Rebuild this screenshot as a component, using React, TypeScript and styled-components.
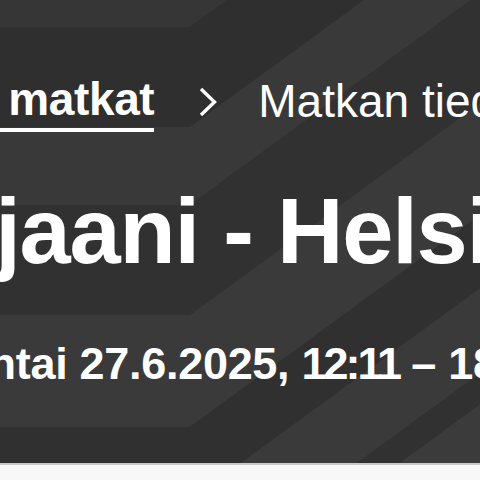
import React from "react"
import styled, { createGlobalStyle } from "styled-components"

const GlobalStyle = createGlobalStyle`
  html, body {
    margin: 0;
    padding: 0;
    background: #f7f7f7;
    overflow: hidden;
  }
  * {
    box-sizing: border-box;
  }
`

const Page = styled.div`
  width: 480px;
  height: 480px;
  display: flex;
  flex-direction: column;
  overflow: hidden;
  font-family: "Liberation Sans", Arial, sans-serif;
`

const Hero = styled.header`
  position: relative;
  height: 463px;
  flex: none;
  background: #303030;
  overflow: hidden;
`

const Backdrop = styled.svg`
  position: absolute;
  inset: 0;
  z-index: 0;
`

const Content = styled.div`
  position: relative;
  z-index: 1;
  display: flex;
  flex-direction: column;
  padding-top: 73px;
  margin-left: -120px;
  color: #ffffff;
  white-space: nowrap;
`

const Breadcrumbs = styled.nav`
  display: flex;
  align-items: center;
  gap: 45px;
  height: 56px;
  font-size: 46px;
  line-height: 56px;
`

const CrumbLink = styled.a`
  color: #ffffff;
  font-weight: 700;
  letter-spacing: -0.4px;
  text-decoration: none;
  padding-bottom: 1px;
  border-bottom: 4px solid #ffffff;
`

const Crumb = styled.span`
  font-weight: 400;
  margin-left: -4px;
`

const Chevron = styled.svg`
  width: 18px;
  height: 30px;
  flex: none;
  margin-top: 2px;
`

const Title = styled.h1`
  margin: 52px 0 0;
  font-size: 92px;
  line-height: 100px;
  font-weight: 700;
  letter-spacing: -1.2px;
`

const Dates = styled.p`
  margin: 55px 0 0;
  font-size: 45px;
  line-height: 56px;
  font-weight: 700;
  letter-spacing: -0.3px;
`

const Time = styled.span`
  letter-spacing: -3px;
`

const Strip = styled.div`
  flex: 1;
  background: #f8f8f8;
  border-top: 2px solid #c9c9c9;
`

// diagonal band pattern of the header: flat on the left, then rising to the right
const SLOPE = 0.73
const KNEE = 190
const bands: [number, number, string][] = [
  [-500, 27, "#363636"],
  [27, 127, "#2f2f2f"],
  [127, 205, "#393939"],
  [205, 315, "#313131"],
  [315, 427, "#3a3a3a"],
  [427, 500, "#303030"],
  [500, 585, "#3a3a3a"],
  [585, 616, "#313131"],
  [616, 1000, "#3b3b3b"],
]

const bandPoints = (a: number, b: number) => {
  const rise = SLOPE * (480 - KNEE)
  return [
    [0, a],
    [KNEE, a],
    [480, a - rise],
    [480, b - rise],
    [KNEE, b],
    [0, b],
  ]
    .map((p) => p.join(","))
    .join(" ")
}

const App: React.FC = () => {
  return (
    <Page>
      <GlobalStyle />
      <Hero>
        <Backdrop width="480" height="463" viewBox="0 0 480 463">
          {bands.map(([a, b, color]) => (
            <polygon key={a} points={bandPoints(a, b)} fill={color} />
          ))}
        </Backdrop>
        <Content>
          <Breadcrumbs>
            <CrumbLink href="#">Omat matkat</CrumbLink>
            <Chevron viewBox="0 0 18 30">
              <polyline
                points="2,2 15.5,15 2,28"
                fill="none"
                stroke="#ffffff"
                strokeWidth="3.4"
              />
            </Chevron>
            <Crumb>Matkan tiedot</Crumb>
          </Breadcrumbs>
          <Title>Kajaani - Helsinki</Title>
          <Dates>
            Perjantai 27.6.2025, <Time>12:11</Time> – 18:06
          </Dates>
        </Content>
      </Hero>
      <Strip />
    </Page>
  )
}

export default App
